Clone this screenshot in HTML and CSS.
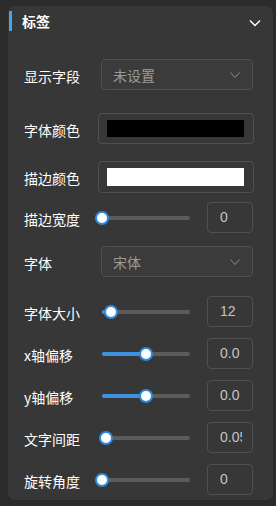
FILE: index.html
```html
<!DOCTYPE html>
<html lang="zh">
<head>
  <meta charset="UTF-8">
  <meta name="viewport" content="width=device-width, initial-scale=1.0">
  <title>标签</title>
  <link rel="stylesheet" href="styles.css">
</head>

<body>

  <!-- Label settings panel -->
  <div class="panel">
    <div class="panel-header">
      <span class="header-bar"></span>
      <h2 class="panel-title">标签</h2>
      <svg class="header-arrow" width="12" height="8" viewBox="0 0 12 8">
        <polyline points="1,1.5 6,6.5 11,1.5" fill="none" stroke="#fff" stroke-width="1.4"/>
      </svg>
    </div>

    <div class="panel-body">
      <div class="row row-first">
        <span class="label">显示字段</span>
        <div class="select">
          <span class="select-text">未设置</span>
          <svg width="10" height="6" viewBox="0 0 10 6">
            <polyline points="0.5,0.5 5,5.5 9.5,0.5" fill="none" stroke="#8a8a8a" stroke-width="1"/>
          </svg>
        </div>
      </div>

      <div class="row row-color1">
        <span class="label">字体颜色</span>
        <div class="color-box"><span class="swatch swatch-black"></span></div>
      </div>

      <div class="row row-color2">
        <span class="label">描边颜色</span>
        <div class="color-box"><span class="swatch swatch-white"></span></div>
      </div>

      <div class="row row-slider1">
        <span class="label">描边宽度</span>
        <div class="slider">
          <span class="slider-fill" style="width: 0%"></span>
          <span class="slider-thumb" style="left: 0%"></span>
        </div>
        <div class="num-input"><span class="num-value">0</span></div>
      </div>

      <div class="row row-select2">
        <span class="label">字体</span>
        <div class="select">
          <span class="select-text">宋体</span>
          <svg width="10" height="6" viewBox="0 0 10 6">
            <polyline points="0.5,0.5 5,5.5 9.5,0.5" fill="none" stroke="#8a8a8a" stroke-width="1"/>
          </svg>
        </div>
      </div>

      <div class="row row-size">
        <span class="label">字体大小</span>
        <div class="slider">
          <span class="slider-fill" style="width: 10.2%"></span>
          <span class="slider-thumb" style="left: 10.2%"></span>
        </div>
        <div class="num-input"><span class="num-value">12</span></div>
      </div>

      <div class="row">
        <span class="label">x轴偏移</span>
        <div class="slider">
          <span class="slider-fill" style="width: 50%"></span>
          <span class="slider-thumb" style="left: 50%"></span>
        </div>
        <div class="num-input"><span class="num-value">0.0</span></div>
      </div>

      <div class="row">
        <span class="label">y轴偏移</span>
        <div class="slider">
          <span class="slider-fill" style="width: 50%"></span>
          <span class="slider-thumb" style="left: 50%"></span>
        </div>
        <div class="num-input"><span class="num-value">0.0</span></div>
      </div>

      <div class="row">
        <span class="label">文字间距</span>
        <div class="slider">
          <span class="slider-fill" style="width: 4.5%"></span>
          <span class="slider-thumb" style="left: 4.5%"></span>
        </div>
        <div class="num-input"><span class="num-value">0.05</span></div>
      </div>

      <div class="row">
        <span class="label">旋转角度</span>
        <div class="slider">
          <span class="slider-fill" style="width: 0%"></span>
          <span class="slider-thumb" style="left: 0%"></span>
        </div>
        <div class="num-input"><span class="num-value">0</span></div>
      </div>
    </div>
  </div>

</body>
</html>
```

FILE: styles.css
```css
/* Global Styles */
body {
  font-family: "Noto Sans CJK SC", "Noto Sans", sans-serif;
  margin: 0;
  padding: 6px 3px 6px 8px;
  background-color: #2b2b2b;
}

/* Panel */
.panel {
  width: 265px;
  height: 494px;
  background-color: #373737;
  border-radius: 7px;
  box-sizing: border-box;
}

.panel-header {
  display: flex;
  align-items: flex-start;
  height: 36px;
  padding: 5px 12px 0 1px;
  box-sizing: border-box;
}

.header-bar {
  width: 3px;
  height: 20px;
  background-color: #4ba3e6;
}

.panel-title {
  margin: 0 0 0 10px;
  font-size: 14px;
  font-weight: 700;
  line-height: 20px;
  color: #fff;
  flex: 1;
}

.header-arrow {
  margin-top: 8px;
}

.panel-body {
  padding: 0 19px 0 16px;
}

/* Rows */
.row {
  display: flex;
  align-items: center;
  height: 31px;
  margin-top: 11px;
}

.row-first { margin-top: 17px; }
.row-color1 { margin-top: 23px; }
.row-color2 { margin-top: 17px; height: 32px; }
.row-slider1 { margin-top: 9px; }
.row-select2 { margin-top: 13px; }
.row-size { margin-top: 19px; }

.label {
  width: 74px;
  font-size: 14px;
  color: #fff;
  padding-top: 2px;
  flex-shrink: 0;
}

/* Select */
.select {
  display: flex;
  align-items: center;
  justify-content: space-between;
  width: 152px;
  height: 31px;
  margin-left: 3px;
  padding: 0 12px 0 11px;
  box-sizing: border-box;
  border: 1px solid #505050;
  border-radius: 4px;
  background-color: #3b3b3b;
}

.select-text {
  font-size: 14px;
  color: #9a9a9a;
}

/* Color picker */
.color-box {
  display: flex;
  width: 156px;
  height: 100%;
  padding: 6px 9px 6px 8px;
  box-sizing: border-box;
  border: 1px solid #505050;
  border-radius: 4px;
}

.swatch {
  flex: 1;
}

.swatch-black { background-color: #000; }
.swatch-white { background-color: #fff; }

/* Slider */
.slider {
  position: relative;
  width: 88px;
  height: 4px;
  margin-left: 4px;
  border-radius: 2px;
  background-color: #5c5c5c;
}

.slider-fill {
  position: absolute;
  left: 0;
  top: 0;
  height: 100%;
  border-radius: 2px;
  background-color: #3d92e0;
}

.slider-thumb {
  position: absolute;
  top: 50%;
  width: 10px;
  height: 10px;
  margin: -7px 0 0 -7px;
  border: 2px solid #2f8ae0;
  border-radius: 50%;
  background-color: #fff;
}

/* Number input */
.num-input {
  width: 46px;
  height: 31px;
  margin-left: 17px;
  padding: 0 10px 0 12px;
  box-sizing: border-box;
  border: 1px solid #505050;
  border-radius: 4px;
}

.num-value {
  display: block;
  width: 22px;
  font-family: "Liberation Sans", sans-serif;
  font-size: 14px;
  line-height: 29px;
  color: #c4c4c4;
  overflow: hidden;
  white-space: nowrap;
}
```
